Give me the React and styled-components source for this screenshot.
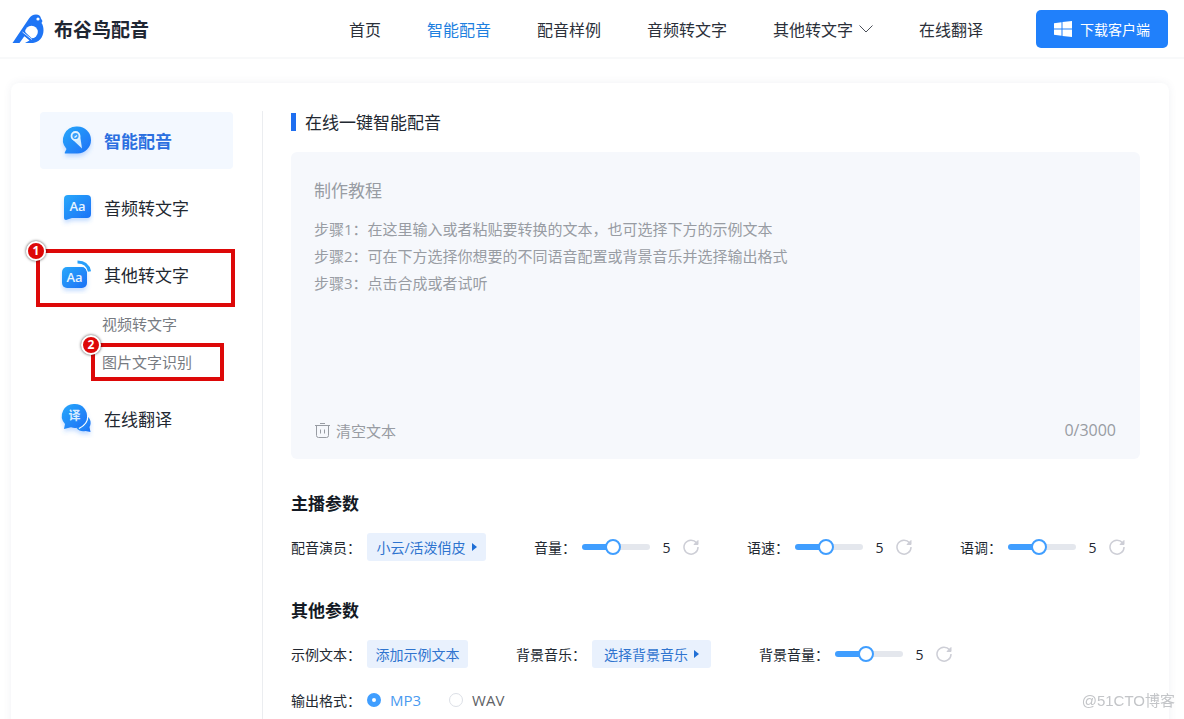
import styled, { createGlobalStyle } from "styled-components";

const GlobalStyle = createGlobalStyle`
    *, *::before, *::after {
        box-sizing: border-box;
    }
    body {
        margin: 0;
        background-color: #ffffff;
        color: #222831;
        font-family: "Open Sans", "Noto Sans CJK SC", sans-serif;
        font-size: 15px;
    }
    html {
        overflow-x: hidden;
    }
    button, input, textarea {
        font-family: inherit;
    }
    h1, h2, p, ul, fieldset, legend {
        margin: 0;
        padding: 0;
        border: none;
    }
`;

const Header = styled.header`
    display: flex;
    align-items: center;
    height: 59px;
    padding: 0 16px 0 12px;
    border-bottom: 2px solid #f8f9fa;
`;

const Logo = styled.a`
    display: flex;
    align-items: center;
    gap: 10px;
    color: #1f2733;
    font-size: 19px;
    font-weight: bold;
    text-decoration: none;
`;

const Nav = styled.nav`
    display: flex;
    gap: 46px;
    margin-left: auto;
    font-size: 16px;
`;

const NavLink = styled.a`
    display: flex;
    align-items: center;
    gap: 6px;
    color: ${({ $active }) => ($active ? "#1e80e0" : "#2b303a")};
    text-decoration: none;
`;

const DownloadButton = styled.button`
    display: flex;
    align-items: center;
    justify-content: center;
    gap: 8px;
    height: 38px;
    margin-left: 53px;
    padding: 0 18px;
    border: none;
    border-radius: 5px;
    background-color: #2080fb;
    color: #ffffff;
    font-size: 14px;
    cursor: pointer;
`;

const Card = styled.div`
    display: flex;
    margin: 24px 15px 0 11px;
    padding: 28px 29px 24px;
    border-radius: 8px;
    box-shadow: 0 0 8px rgba(60, 80, 110, 0.08);
`;

const Sidebar = styled.nav`
    width: 223px;
    flex-shrink: 0;
    padding: 1px 29px 0 0;
    border-right: 1px solid #ebedf0;
`;

const MenuItem = styled.a`
    display: flex;
    align-items: center;
    gap: 10px;
    height: 57px;
    margin-bottom: ${({ $open }) => ($open ? "2px" : "10px")};
    padding-left: 20px;
    border-radius: 4px;
    background-color: ${({ $active }) => ($active ? "#f3f8ff" : "transparent")};
    color: ${({ $active }) => ($active ? "#2a6fe0" : "#222831")};
    font-size: 17px;
    font-weight: ${({ $active }) => ($active ? "bold" : "normal")};
    text-decoration: none;
`;

const Submenu = styled.div`
    display: flex;
    flex-direction: column;
    align-items: flex-start;
    margin-bottom: 9px;
    padding-left: 62px;
`;

const SubLink = styled.a`
    display: block;
    height: 38px;
    color: #777b82;
    line-height: 38px;
    text-decoration: none;
`;

const Marked = styled.div`
    position: relative;
`;

const MarkBox = styled.div`
    position: absolute;
    inset: ${({ $inset }) => $inset};
    border: 4px solid #dd0808;
    pointer-events: none;
`;

const MarkNumber = styled.span`
    position: absolute;
    top: -12px;
    left: -14px;
    display: flex;
    align-items: center;
    justify-content: center;
    width: 20px;
    height: 20px;
    border: 2px solid #ffffff;
    border-radius: 50%;
    background-color: #dd0808;
    box-shadow: 0 0 3px rgba(0, 0, 0, 0.7);
    color: #ffffff;
    font-size: 12px;
    font-weight: bold;
    line-height: 16px;
`;

const Main = styled.main`
    flex: 1;
    min-width: 0;
    padding-left: 28px;
`;

const Title = styled.h1`
    display: flex;
    align-items: center;
    gap: 9px;
    height: 21px;
    font-size: 17px;
    font-weight: normal;
    &::before {
        content: "";
        width: 5px;
        height: 18px;
        background-color: #1f6ff0;
    }
`;

const Editor = styled.div`
    display: flex;
    flex-direction: column;
    height: 307px;
    margin-top: 20px;
    padding: 25px 24px 15px 23px;
    border-radius: 6px;
    background-color: #f6f8fc;
    color: #989ca3;
`;

const Guide = styled.div`
    flex: 1;
    line-height: 27px;
`;

const GuideTitle = styled.p`
    margin-bottom: 11px;
    font-size: 17px;
    line-height: 28px;
`;

const EditorFooter = styled.div`
    display: flex;
    align-items: center;
    justify-content: space-between;
    height: 28px;
    font-size: 16px;
`;

const ClearButton = styled.button`
    display: flex;
    align-items: center;
    gap: 5px;
    padding: 0;
    border: none;
    background: none;
    color: inherit;
    font-size: 15px;
    cursor: pointer;
`;

const SectionTitle = styled.h2`
    margin-top: ${({ $gap }) => $gap};
    color: #141a24;
    font-size: 17px;
    font-weight: bold;
    line-height: 24px;
`;

const Row = styled.div`
    display: flex;
    align-items: center;
    gap: 48px;
    height: 28px;
    margin-top: 17px;
    font-size: 14px;
`;

const Field = styled.div`
    display: flex;
    align-items: center;
`;

const FieldLabel = styled.label`
    width: ${({ $width }) => $width};
    white-space: nowrap;
`;

const Chip = styled.button`
    display: flex;
    align-items: center;
    justify-content: center;
    gap: 6px;
    min-width: ${({ $width }) => $width};
    height: 28px;
    padding: 0 8px;
    border: none;
    border-radius: 3px;
    background-color: #e9f1fd;
    color: #2f74cf;
    font-size: 14px;
    white-space: nowrap;
    cursor: pointer;
`;

const Range = styled.input`
    width: 68px;
    height: 16px;
    margin: 0;
    appearance: none;
    background: none;
    &::-webkit-slider-runnable-track {
        height: 6px;
        border-radius: 3px;
        background: linear-gradient(to right, #409eff 44%, #e4e7ed 44%);
    }
    &::-webkit-slider-thumb {
        width: 16px;
        height: 16px;
        margin-top: -5px;
        border: 2px solid #409eff;
        border-radius: 50%;
        appearance: none;
        background-color: #ffffff;
    }
`;

const RangeValue = styled.output`
    width: 33px;
    text-align: center;
`;

const ResetButton = styled.button`
    display: flex;
    padding: 0;
    border: none;
    background: none;
    color: #cdced6;
    cursor: pointer;
`;

const RadioGroup = styled.fieldset`
    display: flex;
    align-items: center;
    height: 24px;
    margin: 20px 0 32px;
    font-size: 14px;
`;

const RadioLabel = styled.label`
    display: flex;
    align-items: center;
    gap: 9px;
    margin-right: 28px;
    color: #606266;
    font-size: 15px;
    line-height: 20px;
    &:has(input:checked) {
        color: #4a9af0;
    }
`;

const Radio = styled.input`
    width: 14px;
    height: 14px;
    margin: 0;
    border: 1px solid #dcdfe6;
    border-radius: 50%;
    appearance: none;
    background-color: #ffffff;
    &:checked {
        border: 5px solid #409eff;
    }
`;

const Watermark = styled.div`
    position: fixed;
    right: 9px;
    bottom: 8px;
    color: #c3c5c8;
    font-family: "Liberation Sans", "Noto Sans CJK SC", sans-serif;
    font-size: 15px;
    line-height: 20px;
`;

function BirdLogo() {
    return (
        <svg width="32" height="30" viewBox="0 0 32 30" aria-hidden="true">
            <path d="M.5 29 17 4.500C18.800 1.800 21 .5 24 .5c3 0 4.500 1.500 5 4l1.500 2.500-1 2c1.500 2 2 4.500 2 7.500 0 7-5 12-10.500 12.500H13l4.500-2.500-5-4.500L7.500 29Z" fill="#1f75f5" />
            <circle cx="19.500" cy="18" r="6.300" fill="#ffffff" />
            <path d="m12 17 9 8.500-1.500 1.500-9-6Z" fill="#1f75f5" />
            <path d="m10.500 18 9.500 7.500" stroke="#ffffff" strokeWidth=".8" />
            <circle cx="26" cy="5" r="1.600" fill="#ffffff" />
        </svg>
    );
}

function WindowsIcon() {
    return (
        <svg width="18" height="16" viewBox="0 0 18 16" fill="#ffffff" aria-hidden="true">
            <path d="M0 2.300 7.500 1.200V7.500H0ZM8.500 1 18 0V7.500H8.500ZM0 8.500H7.500V14.800L0 13.700ZM8.500 8.500H18V16L8.500 15Z" />
        </svg>
    );
}

function MenuIcon({ name }) {
    return (
        <svg width="34" height="38" viewBox="0 0 34 38" aria-hidden="true">
            <defs>
                <linearGradient id={`fill-${name}`} x1="0" y1="0" x2="1" y2="1">
                    <stop offset="0" stopColor="#27a8fb" />
                    <stop offset="1" stopColor="#1d70f6" />
                </linearGradient>
                <filter id={`glow-${name}`} x="-30%" y="-30%" width="160%" height="180%">
                    <feDropShadow dx="0" dy="3" stdDeviation="2" floodColor="#3d8dff" floodOpacity="0.3" />
                </filter>
            </defs>
            <g fill={`url(#fill-${name})`} filter={`url(#glow-${name})`}>
                {name === "voice" && <path d="M17.500 4.500a13.500 13.500 0 1 1 0 27H6q-2 0-1-1.500L6.500 27A13.500 13.500 0 0 1 17.500 4.500Z" />}
                {name === "audio" && <path d="M8 6h19q4 0 4 4v15q0 4-4 4H12l-6 2q-2 0-2-2V10q0-4 4-4Z" />}
                {name === "other" && <rect x="2" y="11" width="25" height="21" rx="5" />}
                {name === "translate" && (
                    <>
                        <path d="M24 15a8 8 0 0 1 5.500 12l1 5-5-1a9 9 0 0 1-9-3Z" />
                        <path d="M15 4a12 12 0 1 1-4 23.300L4 29l1-5A12 12 0 0 1 15 4Z" />
                    </>
                )}
            </g>
            {name === "voice" && (
                <>
                    <path d="m12.500 17.500 7.500-4.500 2 13.500Z" fill="#d5edff" />
                    <circle cx="15.500" cy="14" r="4" fill="#39a0fb" stroke="#e3f3ff" strokeWidth="1.800" />
                    <path d="m14.500 15.500 2.500-2" stroke="#e3f3ff" strokeWidth="1.500" />
                </>
            )}
            {name === "audio" && <text x="17.500" y="22" textAnchor="middle" fontSize="13" fontWeight="600" fill="#e6f4ff">Aa</text>}
            {name === "other" && (
                <>
                    <path d="M17 6q11 0 13 9.500" fill="none" stroke="#ffffff" strokeWidth="6" />
                    <path d="M17.500 6q10 0 12 9.500" fill="none" stroke="#279ffb" strokeWidth="3.200" />
                    <text x="14.500" y="26" textAnchor="middle" fontSize="13" fontWeight="600" fill="#e6f4ff">Aa</text>
                </>
            )}
            {name === "translate" && (
                <>
                    <path d="M27.800 16q.2 8-8.800 12.500" fill="none" stroke="#ffffff" strokeWidth="1.200" />
                    <text x="14.500" y="20" textAnchor="middle" fontSize="12" fontWeight="bold" fill="#d8edff">译</text>
                </>
            )}
        </svg>
    );
}

function TrashIcon() {
    return (
        <svg width="17" height="17" viewBox="0 0 17 17" fill="none" stroke="currentColor" aria-hidden="true">
            <path d="M1 3.500h15M6 1.500h5M2.500 3.500v10q0 2 2 2h8q2 0 2-2v-10M6.500 7.500v4M10.500 7.500v4" />
        </svg>
    );
}

function ResetIcon() {
    return (
        <svg width="16" height="16" viewBox="0 0 16 16" fill="none" stroke="currentColor" strokeWidth="1.500" aria-hidden="true">
            <path d="M13.500 3.800A7 7 0 1 0 15 8" />
            <path d="M15 1.500v4h-4Z" fill="currentColor" strokeWidth="1" />
        </svg>
    );
}

function Arrow() {
    return (
        <svg width="5" height="8" viewBox="0 0 5 8" fill="#1f6fd6" aria-hidden="true">
            <path d="M0 0 5 4 0 8Z" />
        </svg>
    );
}

function SliderField({ id, label, width }) {
    return (
        <Field>
            <FieldLabel htmlFor={id} $width={width}>{label}：</FieldLabel>
            <Range id={id} type="range" min="1" max="10" step="1" defaultValue="5" />
            <RangeValue htmlFor={id}>5</RangeValue>
            <ResetButton type="button" aria-label={`重置${label}`}>
                <ResetIcon />
            </ResetButton>
        </Field>
    );
}

function App() {
    return (
        <>
            <GlobalStyle />
            <Header>
                <Logo href="#">
                    <BirdLogo />
                    布谷鸟配音
                </Logo>
                <Nav>
                    <NavLink href="#">首页</NavLink>
                    <NavLink href="#" $active>智能配音</NavLink>
                    <NavLink href="#">配音样例</NavLink>
                    <NavLink href="#">音频转文字</NavLink>
                    <NavLink href="#">
                        其他转文字
                        <svg width="14" height="8" viewBox="0 0 14 8" fill="none" stroke="#4a4f58" aria-hidden="true">
                            <path d="m.5.5 6.500 6.500L13.500.5" />
                        </svg>
                    </NavLink>
                    <NavLink href="#">在线翻译</NavLink>
                </Nav>
                <DownloadButton type="button">
                    <WindowsIcon />
                    下载客户端
                </DownloadButton>
            </Header>
            <Card>
                <Sidebar>
                    <MenuItem href="#" $active>
                        <MenuIcon name="voice" />
                        智能配音
                    </MenuItem>
                    <MenuItem href="#">
                        <MenuIcon name="audio" />
                        音频转文字
                    </MenuItem>
                    <Marked>
                        <MenuItem href="#" $open>
                            <MenuIcon name="other" />
                            其他转文字
                        </MenuItem>
                        <MarkBox $inset="3px -2px -4px -4px">
                            <MarkNumber>1</MarkNumber>
                        </MarkBox>
                    </Marked>
                    <Submenu>
                        <SubLink href="#">视频转文字</SubLink>
                        <Marked>
                            <SubLink href="#">图片文字识别</SubLink>
                            <MarkBox $inset="0 -32px 0 -11px">
                                <MarkNumber>2</MarkNumber>
                            </MarkBox>
                        </Marked>
                    </Submenu>
                    <MenuItem href="#">
                        <MenuIcon name="translate" />
                        在线翻译
                    </MenuItem>
                </Sidebar>
                <Main>
                    <Title>在线一键智能配音</Title>
                    <Editor>
                        <Guide>
                            <GuideTitle>制作教程</GuideTitle>
                            <p>步骤1：在这里输入或者粘贴要转换的文本，也可选择下方的示例文本</p>
                            <p>步骤2：可在下方选择你想要的不同语音配置或背景音乐并选择输出格式</p>
                            <p>步骤3：点击合成或者试听</p>
                        </Guide>
                        <EditorFooter>
                            <ClearButton type="button">
                                <TrashIcon />
                                清空文本
                            </ClearButton>
                            <span>0/3000</span>
                        </EditorFooter>
                    </Editor>
                    <SectionTitle $gap="33px">主播参数</SectionTitle>
                    <Row>
                        <Field>
                            <FieldLabel htmlFor="actor" $width="76px">配音演员：</FieldLabel>
                            <Chip id="actor" type="button" $width="119px">
                                小云/活泼俏皮
                                <Arrow />
                            </Chip>
                        </Field>
                        <SliderField id="volume" label="音量" width="48px" />
                        <SliderField id="speed" label="语速" width="48px" />
                        <SliderField id="pitch" label="语调" width="48px" />
                    </Row>
                    <SectionTitle $gap="38px">其他参数</SectionTitle>
                    <Row>
                        <Field>
                            <FieldLabel htmlFor="sample" $width="76px">示例文本：</FieldLabel>
                            <Chip id="sample" type="button" $width="101px">添加示例文本</Chip>
                        </Field>
                        <Field>
                            <FieldLabel htmlFor="music" $width="76px">背景音乐：</FieldLabel>
                            <Chip id="music" type="button" $width="119px">
                                选择背景音乐
                                <Arrow />
                            </Chip>
                        </Field>
                        <SliderField id="music-volume" label="背景音量" width="76px" />
                    </Row>
                    <RadioGroup aria-labelledby="format">
                        <FieldLabel as="span" id="format" $width="76px">输出格式：</FieldLabel>
                        <RadioLabel>
                            <Radio type="radio" name="format" defaultChecked />
                            MP3
                        </RadioLabel>
                        <RadioLabel>
                            <Radio type="radio" name="format" />
                            WAV
                        </RadioLabel>
                    </RadioGroup>
                </Main>
            </Card>
            <Watermark>@51CTO博客</Watermark>
        </>
    );
}

export default App;
